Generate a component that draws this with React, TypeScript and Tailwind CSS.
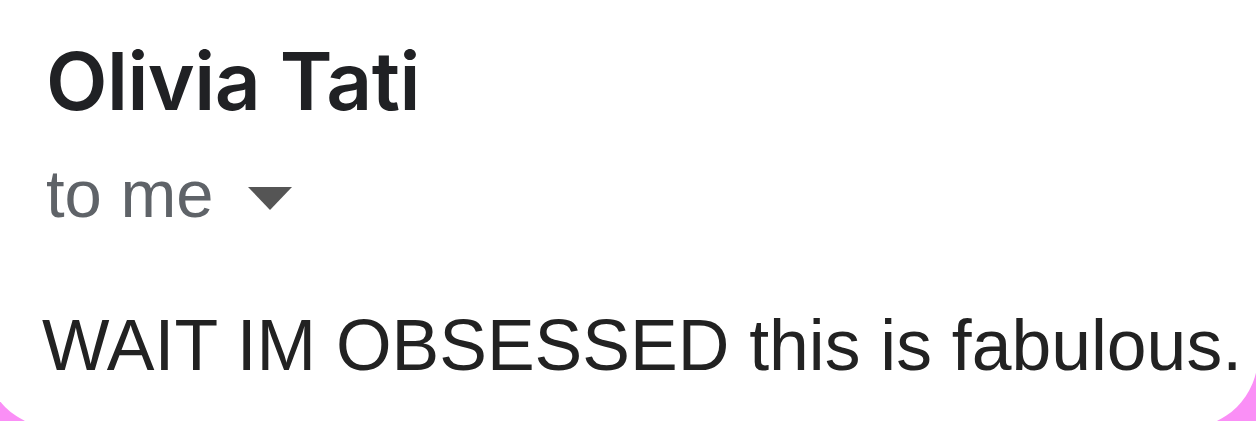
export default function App() {
  return (
    <div className="h-[421px] w-[1256px] overflow-hidden bg-[#fa8ff6]">
      {/* Message card — extends past the left/top edges of the crop */}
      <div className="-ml-[16px] h-[428px] w-[1274px] rounded-b-[72px] bg-white pl-[62px]">
        <div className="pt-[41px]">
          <h1 className="font-['Inter',sans-serif] text-[80px] font-semibold leading-[80px] tracking-[-0.5px] text-[#202124]">
            Olivia Tati
          </h1>
        </div>
        <div className="mt-[40px] flex items-center font-['Liberation_Sans',Arial,sans-serif] text-[67px] leading-[66px] text-[#5f6368]">
          <span>to me</span>
          <svg className="ml-[34px] mt-[8px]" width="44" height="23" viewBox="0 0 44 23">
            <path d="M0 0 L44 0 L22 23 Z" fill="#555" />
          </svg>
        </div>
        <p className="-ml-[4px] mt-[82px] font-['Liberation_Sans',Arial,sans-serif] text-[71.5px] leading-[72px] text-[#222]">
          WAIT IM OBSESSED this is fabulous.
        </p>
      </div>
    </div>
  );
}
